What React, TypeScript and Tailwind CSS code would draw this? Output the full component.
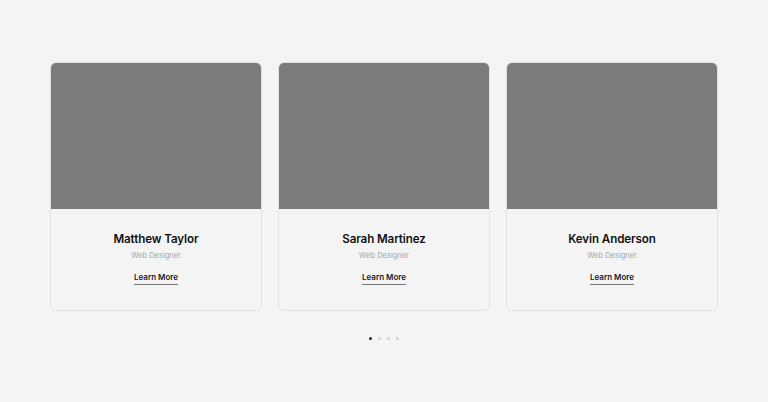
const people = [
  { name: 'Matthew Taylor', role: 'Web Designer' },
  { name: 'Sarah Martinez', role: 'Web Designer' },
  { name: 'Kevin Anderson', role: 'Web Designer' },
];

export default function App() {
  return (
    <div className="w-[768px] h-[402px] bg-[#f4f4f4] pt-[62px] font-['Inter',sans-serif]">
      <div className="flex justify-center gap-4">
        {people.map((p) => (
          <div
            key={p.name}
            className="w-[212px] h-[249px] rounded-[6px] border border-[#e2e2e2] bg-[#f4f4f4] overflow-hidden flex flex-col"
          >
            <div className="h-[146px] bg-[#7a7b7c]" />
            <div className="flex flex-col items-center pt-[22px]">
              <h3 className="text-[11.6px] leading-[16px] font-semibold text-[#111] tracking-[-0.1px]">
                {p.name}
              </h3>
              <span className="mt-[4px] text-[7.5px] leading-[10px] text-[#a6a6a6]">
                {p.role}
              </span>
              <a className="mt-[10px] text-[8px] leading-[12px] font-semibold text-[#1a1a1a] border-b border-[#777] pb-[1px]">
                Learn More
              </a>
            </div>
          </div>
        ))}
      </div>
      <div className="flex justify-center gap-[6.3px] mt-[26px]">
        <span className="w-[3px] h-[3px] rounded-full bg-[#3a1d2c]" />
        <span className="w-[3px] h-[3px] rounded-full bg-[#cfcfcf]" />
        <span className="w-[3px] h-[3px] rounded-full bg-[#cfcfcf]" />
        <span className="w-[3px] h-[3px] rounded-full bg-[#cfcfcf]" />
      </div>
    </div>
  );
}
